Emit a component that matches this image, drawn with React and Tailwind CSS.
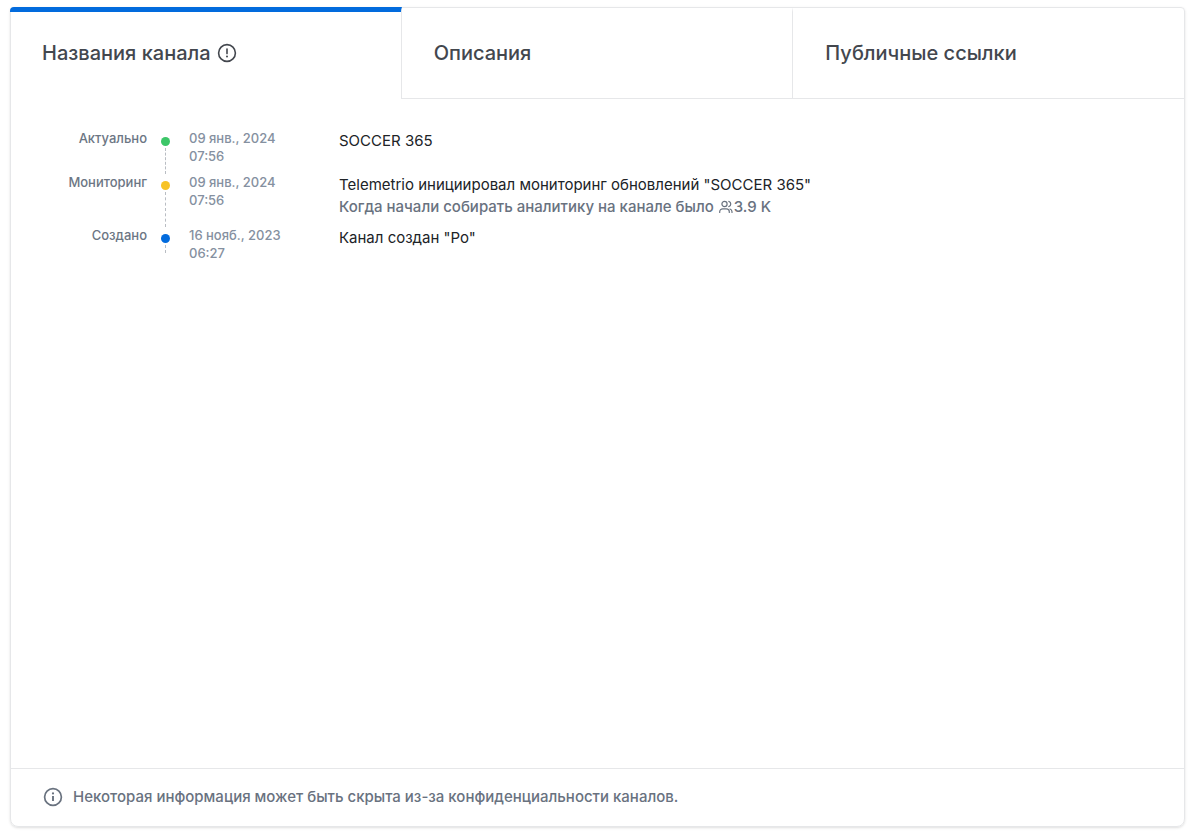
const tabBase = "flex h-[92px] flex-1 items-center gap-1.5 border-t-[5px] px-8 pb-[5px] text-left text-xl font-medium text-[#43474e]";

const events = [
  { label: "Актуально", dot: "bg-[#3cc668]", date: "09 янв., 2024", time: "07:56", title: "SOCCER 365", height: "h-11" },
  { label: "Мониторинг", dot: "bg-[#f7c325]", date: "09 янв., 2024", time: "07:56", title: 'Telemetrio инициировал мониторинг обновлений "SOCCER 365"', note: true, height: "h-[53px]" },
  { label: "Создано", dot: "bg-[#026bdd]", date: "16 нояб., 2023", time: "06:27", title: 'Канал создан "Po"', height: "h-[26px]" },
];

function AlertIcon() {
  return (
    <svg className="size-5" viewBox="0 0 20 20" fill="none" stroke="currentColor" strokeWidth="1.6" aria-hidden="true">
      <circle cx="10" cy="10" r="8.4" />
      <path d="M10 6v4.6" strokeLinecap="round" />
      <circle cx="10" cy="13.6" r="1" fill="currentColor" stroke="none" />
    </svg>
  );
}

function InfoIcon() {
  return (
    <svg className="size-5" viewBox="0 0 20 20" fill="none" stroke="currentColor" strokeWidth="1.7" aria-hidden="true">
      <circle cx="10" cy="10" r="8.4" />
      <path d="M10 9v5" strokeWidth="1.9" />
      <circle cx="10" cy="6.4" r="1.1" fill="currentColor" stroke="none" />
    </svg>
  );
}

function UsersIcon() {
  return (
    <svg className="inline h-3.5 w-4 align-[-2px]" viewBox="0 0 16 14" fill="none" stroke="currentColor" strokeWidth="1.2" strokeLinecap="round" strokeLinejoin="round" aria-hidden="true">
      <circle cx="6.5" cy="4" r="2.6" />
      <path d="M1.7 12.5v-.7a3 3 0 0 1 3-3h3.6a3 3 0 0 1 3 3v.7M10.8 1.4a2.7 2.7 0 0 1 0 5.2M14 12.5v-.7a3 3 0 0 0-2-2.8" />
    </svg>
  );
}

export default function App() {
  return (
    <div className="flex min-h-screen bg-white pt-[7px] pr-[17px] pb-1.5 pl-2.5 font-['Inter',sans-serif]">
      <main className="flex flex-1 flex-col rounded-t-sm rounded-b-lg border border-[#e6e7e9] shadow-sm">
        <div role="tablist" className="-mt-px -ml-px flex">
          <button role="tab" aria-selected="true" className={`${tabBase} rounded-tl-sm border-r border-t-[#026bdd] border-r-[#e6e7e9]`}>
            Названия канала
            <AlertIcon />
          </button>
          <button role="tab" aria-selected="false" className={`${tabBase} border-r border-b border-t-transparent border-r-[#e6e7e9] border-b-[#e6e7e9]`}>Описания</button>
          <button role="tab" aria-selected="false" className={`${tabBase} border-b border-t-transparent border-b-[#e6e7e9]`}>Публичные ссылки</button>
        </div>
        <ol className="flex-1 px-8 pt-[31px]">
          {events.map((e) => (
            <li key={e.label} className={`flex ${e.height}`}>
              <div className="-mt-px w-[104px] text-right text-[13px] leading-[18px] font-medium text-[#6c7684]">{e.label}</div>
              <div className="flex w-[37px] flex-col items-center">
                <span className={`mt-[7px] size-[9px] shrink-0 rounded-full ${e.dot}`} />
                <span className="mt-0.5 w-0 flex-1 border-l border-dashed border-[#b9bdc3]" />
              </div>
              <div className="-mt-px ml-[5px] w-[150px] text-[13px] leading-[18px] font-medium text-[#8590a0]">
                {e.date}<br />{e.time}
              </div>
              <div className="text-[15px] leading-[22px] text-[#202327]">
                <p>{e.title}</p>
                {e.note && <p className="font-medium text-[#69727f]">Когда начали собирать аналитику на канале было <UsersIcon />3.9 K</p>}
              </div>
            </li>
          ))}
        </ol>
        <footer className="flex h-[58px] items-center gap-2.5 border-t border-[#e6e7e9] px-8 pb-px text-[15px] font-medium text-[#69727f]">
          <InfoIcon />
          Некоторая информация может быть скрыта из-за конфиденциальности каналов.
        </footer>
      </main>
    </div>
  );
}
